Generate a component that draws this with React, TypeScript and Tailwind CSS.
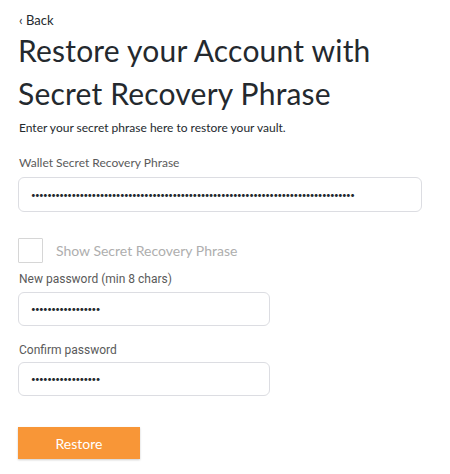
import React from "react";

export default function App() {
  const dots = (n: number) => "•".repeat(n);
  return (
    <div className="w-[450px] h-[474px] bg-white overflow-hidden" style={{ fontFamily: "Lato, 'Noto Sans', sans-serif" }}>
      <div className="pl-[18px] pt-[12px] flex flex-col">
        <div className="text-[13px] leading-[16px] text-[#24292e] pl-[1px]">‹ Back</div>
        <h1 className="mt-[1px] text-[30px] leading-[43px] font-normal text-[#24292e] tracking-[0.2px]">
          Restore your Account with
          <br />
          Secret Recovery Phrase
        </h1>
        <p className="mt-[6px] text-[12px] leading-[14px] text-[#24292e] pl-[1px]">
          Enter your secret phrase here to restore your vault.
        </p>
        <label className="mt-[20px] text-[12px] leading-[16px] text-[#5a5a5a] pl-[1px]">
          Wallet Secret Recovery Phrase
        </label>
        <div className="mt-[6px] w-[404px] h-[35px] border border-[#dcdde2] rounded-[6px] flex items-center pl-[12px] text-[#24292e] text-[8px] tracking-[-0.6px]">
          {dots(80)}
        </div>
        <div className="mt-[26px] flex items-center h-[25px]">
          <div className="w-[25px] h-[25px] border border-[#d6d6d6] rounded-[1px]" />
          <span className="ml-[13px] text-[14px] leading-[20px] text-[#aeaeae]">Show Secret Recovery Phrase</span>
        </div>
        <label className="mt-[8px] text-[12px] leading-[16px] text-[#5a5a5a] pl-[1px]" style={{ fontFamily: "Roboto, sans-serif" }}>
          New password (min 8 chars)
        </label>
        <div className="mt-[5px] w-[252px] h-[34px] border border-[#dcdde2] rounded-[6px] flex items-center pl-[12px] text-[#24292e] text-[8px] tracking-[-0.6px]">
          {dots(17)}
        </div>
        <label className="mt-[16px] text-[12px] leading-[16px] text-[#5a5a5a] pl-[1px]" style={{ fontFamily: "Roboto, sans-serif" }}>
          Confirm password
        </label>
        <div className="mt-[4px] w-[252px] h-[34px] border border-[#dcdde2] rounded-[6px] flex items-center pl-[12px] text-[#24292e] text-[8px] tracking-[-0.6px]">
          {dots(17)}
        </div>
        <button className="mt-[31px] w-[122px] h-[32px] bg-[#f89637] text-white text-[14px] shadow-[0_1px_2px_rgba(0,0,0,0.2)]">
          Restore
        </button>
      </div>
    </div>
  );
}
